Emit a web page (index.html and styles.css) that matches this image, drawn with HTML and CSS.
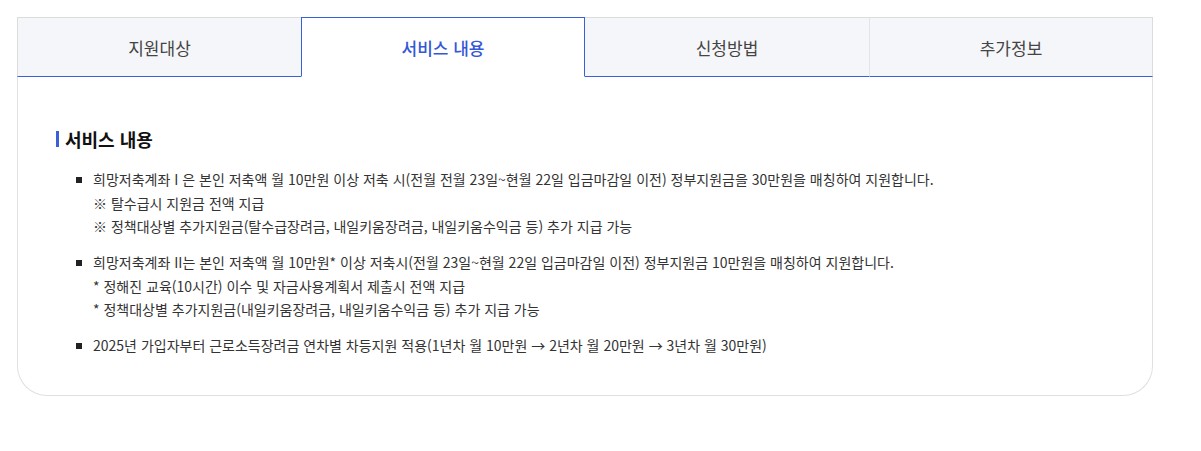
FILE: index.html
```html
<!DOCTYPE html>
<html lang="ko">
<head>
<meta charset="utf-8">
<title>서비스 내용</title>
<link rel="stylesheet" href="styles.css">
</head>
<body>
<div class="wrap">
  <div class="tabs">
    <div class="tab">지원대상</div>
    <div class="tab active">서비스 내용</div>
    <div class="tab">신청방법</div>
    <div class="tab last">추가정보</div>
  </div>
  <div class="panel">
    <h3 class="title">서비스 내용</h3>
    <ul class="list">
      <li>
        <p>희망저축계좌 I 은 본인 저축액 월 10만원 이상 저축 시(전월 전월 23일~현월 22일 입금마감일 이전) 정부지원금을 30만원을 매칭하여 지원합니다.</p>
        <p>※ 탈수급시 지원금 전액 지급</p>
        <p>※ 정책대상별 추가지원금(탈수급장려금, 내일키움장려금, 내일키움수익금 등) 추가 지급 가능</p>
      </li>
      <li>
        <p>희망저축계좌 II는 본인 저축액 월 10만원* 이상 저축시(전월 23일~현월 22일 입금마감일 이전) 정부지원금 10만원을 매칭하여 지원합니다.</p>
        <p>* 정해진 교육(10시간) 이수 및 자금사용계획서 제출시 전액 지급</p>
        <p>* 정책대상별 추가지원금(내일키움장려금, 내일키움수익금 등) 추가 지급 가능</p>
      </li>
      <li>
        <p>2025년 가입자부터 근로소득장려금 연차별 차등지원 적용(1년차 월 10만원 → 2년차 월 20만원 → 3년차 월 30만원)</p>
      </li>
    </ul>
  </div>
</div>
</body>
</html>
```
FILE: styles.css
```css
html, body {
  margin: 0;
  padding: 0;
  background: #fff;
}
body {
  font-family: "Noto Sans CJK KR", "Noto Sans", sans-serif;
  color: #333;
}
.wrap {
  width: 1136px;
  padding: 17px 0 0 17px;
}
.tabs {
  display: grid;
  grid-template-columns: repeat(4, 1fr);
}
.tab {
  height: 58px;
  display: flex;
  align-items: center;
  justify-content: center;
  font-size: 17px;
  color: #444;
  background: #f5f6fa;
  border-top: 1px solid #dcdcdc;
  border-bottom: 1px solid #3b5fd9;
  border-left: 1px solid #e2e4ea;
}
.tab:first-child {
  border-left: 1px solid #dcdcdc;
}
.tab.last {
  border-right: 1px solid #dcdcdc;
}
.tab.active {
  background: #fff;
  color: #3458d6;
  font-weight: 500;
  border: 1px solid #3b5fd9;
  border-bottom-color: #fff;
}
.tab.active + .tab {
  border-left: none;
}
.panel {
  border: 1px solid #e0e0e0;
  border-top: none;
  border-radius: 0 0 30px 30px;
  padding: 50px 38px 37px 38px;
}
.title {
  margin: 0 0 17px 0;
  font-size: 18px;
  font-weight: 700;
  color: #111;
  line-height: 24px;
  display: flex;
  align-items: center;
  gap: 6px;
}
.title::before {
  content: "";
  width: 3px;
  height: 16px;
  background: #3b5fd9;
}
.list {
  list-style: none;
  margin: 0;
  padding: 0 0 0 20px;
}
.list li {
  position: relative;
  padding-left: 17px;
  margin-bottom: 12.5px;
}
.list li:last-child {
  margin-bottom: 0;
}
.list li::before {
  content: "";
  position: absolute;
  left: 0;
  top: 9px;
  width: 6px;
  height: 6px;
  background: #222;
}
.list p {
  margin: 0;
  font-size: 14px;
  line-height: 23.5px;
  color: #333;
}
```
